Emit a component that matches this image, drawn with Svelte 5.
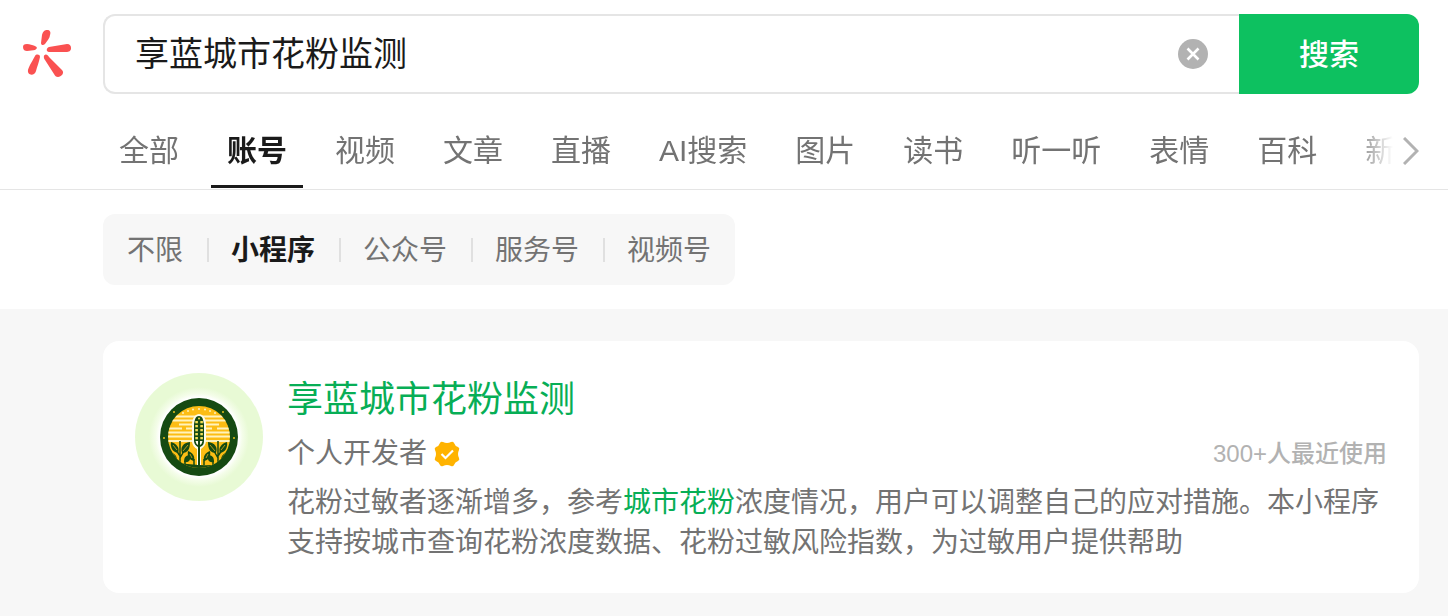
<script>
	let query = $state('享蓝城市花粉监测');
	let activeTab = $state('账号');
	let activeFilter = $state('小程序');

	const tabs = ['全部', '账号', '视频', '文章', '直播', 'AI搜索', '图片', '读书', '听一听', '表情', '百科', '新闻'];
	const filters = ['不限', '小程序', '公众号', '服务号', '视频号'];

	// leaves on one side of the logo, mirrored for the other side
	const leaves = [
		'M47 80 C45 74 48 70 55 69 C55 76 53 80 47 80 Z',
		'M43 80 C38 79 35 75 36 69 C42 71 45 75 43 80 Z',
		'M59 88 C54 87 52 83 53 78 C58 80 60 83 59 88 Z',
		'M42 87 C37 87 34 84 33 79 C38 79 42 82 42 87 Z',
		'M49 89 C49 84 51 82 55 82 C56 87 54 90 49 89 Z'
	];
	const stems = 'M45 92 V68 M45 85 L49 78 M45 83 L41 77 M59 92 V86 M50 92 V88 M40 92 V86';
	const veins = 'M48 78 L53 72 M42 77 L38 72 M57 85 L55 81 M40 85 L36 81';

	function clearQuery() {
		query = '';
	}
</script>

<header>
	<form class="search" onsubmit={(e) => e.preventDefault()}>
		<svg class="logo" viewBox="0 2 64 64" aria-hidden="true">
			<path d="M27 15 C28 11 30 10 32 10 C35 10 36 12 35 15 C35 18 32 21 30 24 C28 26 26 25 26 23 Z" />
			<path d="M12 24 C9 24 8 25 8 27 C8 30 10 31 12 31 C15 31 18 30 20 30 C23 28 22 27 20 26 C17 25 15 24 12 24 Z" />
			<path d="M34 27 L52 24 C55 24 56 26 56 28 C56 31 54 32 51 32 L34 32 C31 32 31 28 34 27 Z" />
			<path d="M20 36 C21 34 25 34 25 37 C24 42 22 47 21 51 C20 56 12 56 13 50 C14 46 18 40 20 36 Z" />
			<path d="M30 40 C28 37 29 35 30 35 C31 34 33 35 34 37 L47 50 C50 53 46 57 43 57 C41 57 40 56 39 54 Z" />
		</svg>
		<div class="box">
			<input type="text" aria-label="搜索" bind:value={query} />
			<button type="button" class="clear" aria-label="清除" onclick={clearQuery}>
				<svg viewBox="0 0 30 30"><path d="M9.5 9.5 L20.5 20.5 M20.5 9.5 L9.5 20.5" /></svg>
			</button>
		</div>
		<button class="submit">搜索</button>
	</form>

	<div class="tabs">
		<nav>
			{#each tabs as tab}
				<button class:active={tab === activeTab} onclick={() => (activeTab = tab)}>{tab}</button>
			{/each}
		</nav>
		<button class="more" aria-label="更多">
			<svg viewBox="0 0 16 28"><path d="M1 1 L14 14 L1 27" /></svg>
		</button>
	</div>

	<div class="filter-row">
		<div class="filters">
			{#each filters as filter}
				<button class:active={filter === activeFilter} onclick={() => (activeFilter = filter)}>{filter}</button>
			{/each}
		</div>
	</div>
</header>

<main>
	<article>
		<svg class="avatar" viewBox="0 0 128 128" aria-hidden="true">
			<defs>
				<radialGradient id="halo">
					<stop offset="0.62" stop-color="#fff" />
					<stop offset="0.68" stop-color="#f4fde9" />
					<stop offset="0.78" stop-color="#e8fad5" />
				</radialGradient>
				<clipPath id="disc"><circle cx="64" cy="64" r="31" /></clipPath>
			</defs>
			<circle cx="64" cy="64" r="64" fill="url(#halo)" />
			<circle cx="64" cy="64" r="39" fill="#154a12" />
			<g clip-path="url(#disc)">
				<rect x="32" y="32" width="64" height="64" fill="#fcbd14" />
				<path class="rays" d="M36 43.5 H92 M33 47.5 H95 M44 51.5 H60 M68 51.5 H84 M33 55.5 H47 M51 55.5 H77 M82 55.5 H95 M33 59.5 H95 M33 63.5 H95 M33 68 H95" />
				<g fill="#fff3bd">
					<circle cx="48" cy="40" r="1" />
					<circle cx="53" cy="38" r="1" />
					<circle cx="58" cy="36.5" r="1" />
					<circle cx="64" cy="36" r="1" />
					<circle cx="70" cy="36.5" r="1" />
					<circle cx="75" cy="38" r="1" />
					<circle cx="80" cy="40" r="1" />
				</g>
				<path d="M30 88 Q44 91 64 92 T98 88 V98 H30 Z" fill="#154a12" />
				{#each ['', 'translate(128 0) scale(-1 1)'] as transform}
					<g {transform}>
						<path class="stems" d={stems} />
						{#each leaves as d}
							<path class="leaf" {d} />
						{/each}
						<path class="veins" d={veins} />
					</g>
				{/each}
				<path d="M64 41 C58 42 57 48 57 53 V68 C57 72 60 75 62 76 V92 H66 V76 C69 74 71 71 71 68 V53 C71 47 70 42 64 41 Z" fill="#fffbe8" />
			</g>
			<path d="M64 43 C60 43 60 47 59 51 V68 C59 71 61 73 63 74 V92 H65 V74 C68 73 69 71 69 68 V51 C68 47 68 43 64 43 Z" fill="#154a12" />
			<g fill="#f2dc55">
				<circle cx="64" cy="45.5" r="1" />
				{#each [48, 52, 56, 60, 64] as y}
					<rect x="60.3" {y} width="2.6" height="2.3" />
					<rect x="65.3" {y} width="2.6" height="2.3" />
				{/each}
			</g>
			<path d="M60.5 68 H63 V72 Q61 71 60.5 68 Z M65 68 H67.5 Q67 71 65 72 Z" fill="#fffbe8" />
			<g fill="#e8be1c">
				<circle cx="39" cy="39" r="1" />
				<circle cx="88" cy="39" r="1" />
				<circle cx="29" cy="65" r="1" />
				<circle cx="99" cy="65" r="1" />
			</g>
		</svg>

		<div class="info">
			<h2><a href="#result">享蓝城市花粉监测</a></h2>
			<div class="meta">
				<span>个人开发者</span>
				<svg class="badge" viewBox="0 0 26 26" aria-hidden="true">
					<path class="seal" d="M9 1 Q13 3 17 1 Q19 0 20 2 Q21 5 24 6 Q26 7 25 9 Q23 13 25 17 Q26 19 24 20 Q21 21 20 24 Q19 26 17 25 Q13 23 9 25 Q7 26 6 24 Q5 21 2 20 Q0 19 1 17 Q3 13 1 9 Q0 7 2 6 Q5 5 6 2 Q7 0 9 1 Z" />
					<path class="tick" d="M7.5 13 L11.5 17 L19 9.5" />
				</svg>
				<span class="usage">300+人最近使用</span>
			</div>
			<p>花粉过敏者逐渐增多，参考<em>城市花粉</em>浓度情况，用户可以调整自己的应对措施。本小程序支持按城市查询花粉浓度数据、花粉过敏风险指数，为过敏用户提供帮助</p>
		</div>
	</article>
</main>

<style>
	:global(body) {
		background: #f7f7f7;
		font-family: 'Liberation Sans', 'Noto Sans CJK SC', sans-serif;
	}

	button {
		padding: 0;
		border: none;
		background: none;
		font-family: inherit;
		cursor: pointer;
	}

	svg {
		display: block;
		flex: none;
	}

	header {
		padding-top: 14px;
		background: #fff;
	}

	.search {
		display: flex;
		align-items: center;
		padding-right: 29px;
	}

	.logo {
		width: 64px;
		height: 64px;
		margin: 0 24px 0 15px;
		fill: #fa5151;
	}

	.box {
		flex: 1;
		display: flex;
		align-items: center;
		box-sizing: border-box;
		height: 80px;
		padding: 0 31px 0 30px;
		border: 2px solid #e5e5e5;
		border-right: none;
		border-radius: 12px 0 0 12px;
	}

	input {
		flex: 1;
		min-width: 0;
		padding: 0;
		border: none;
		outline: none;
		background: none;
		color: #1a1a1a;
		font-family: inherit;
		font-size: 34px;
		line-height: 48px;
	}

	.clear {
		width: 30px;
		height: 30px;
		border-radius: 50%;
		background: #b2b2b2;
	}

	.clear path {
		fill: none;
		stroke: #fff;
		stroke-width: 2.6;
	}

	.submit {
		width: 180px;
		height: 80px;
		padding-bottom: 4px;
		border-radius: 0 12px 12px 0;
		background: #0dc160;
		color: #fff;
		font-size: 30px;
		font-weight: 500;
	}

	.tabs {
		display: flex;
		align-items: center;
		padding: 0 29px 0 103px;
		border-bottom: 1px solid #e5e5e5;
	}

	nav {
		flex: 1;
		min-width: 0;
		display: flex;
		gap: 16px;
		overflow: hidden;
		padding-bottom: 1px;
		mask-image: linear-gradient(to left, transparent, #000 40px);
	}

	nav button {
		flex: none;
		padding: 36px 16px 13px;
		border-bottom: 3px solid transparent;
		color: #737373;
		font-size: 30px;
		line-height: 42px;
	}

	nav button.active {
		border-bottom-color: #1a1a1a;
		color: #1a1a1a;
		font-weight: 700;
	}

	.more {
		margin: 18px 0 0 10px;
	}

	.more svg {
		width: 16px;
		height: 28px;
	}

	.more path {
		fill: none;
		stroke: #b2b2b2;
		stroke-width: 3;
	}

	.filter-row {
		display: flex;
		padding: 24px 29px 24px 103px;
	}

	.filters {
		display: flex;
		border-radius: 12px;
		background: #f7f7f7;
	}

	.filters button {
		position: relative;
		padding: 17px 24px 14px;
		color: #737373;
		font-size: 28px;
		line-height: 40px;
	}

	.filters button.active {
		color: #1a1a1a;
		font-weight: 700;
	}

	.filters button + button::before {
		content: '';
		position: absolute;
		top: 24px;
		bottom: 23px;
		left: 0;
		width: 2px;
		background: #e0e0e0;
	}

	main {
		padding: 32px 29px 23px 103px;
	}

	article {
		display: flex;
		align-items: flex-start;
		gap: 24px;
		padding: 32px 32px 30px;
		border-radius: 16px;
		background: #fff;
	}

	.avatar {
		width: 128px;
		height: 128px;
	}

	.rays {
		stroke: #fff3bd;
		stroke-width: 1.8;
	}

	.leaf {
		fill: #154a12;
	}

	.stems {
		fill: none;
		stroke: #154a12;
		stroke-width: 1.5;
	}

	.veins {
		stroke: #dfae1c;
		stroke-width: 0.8;
	}

	.info {
		flex: 1;
		min-width: 0;
		padding-top: 1px;
	}

	h2 {
		margin: 0 0 8px;
		font-size: 36px;
		font-weight: 400;
		line-height: 52px;
	}

	h2 a {
		color: #07ae56;
		text-decoration: none;
	}

	.meta {
		display: flex;
		align-items: center;
		gap: 7px;
		margin-bottom: 9px;
		color: #737373;
		font-size: 28px;
		line-height: 40px;
	}

	.badge {
		width: 26px;
		height: 26px;
	}

	.seal {
		fill: #ffb300;
	}

	.tick {
		fill: none;
		stroke: #fff;
		stroke-width: 2.2;
	}

	.usage {
		margin-left: auto;
		color: #b2b2b2;
		font-size: 24px;
		font-weight: 500;
	}

	p {
		margin: 0;
		color: #737373;
		font-size: 28px;
		line-height: 40px;
	}

	em {
		color: #07ae56;
		font-style: normal;
	}
</style>
